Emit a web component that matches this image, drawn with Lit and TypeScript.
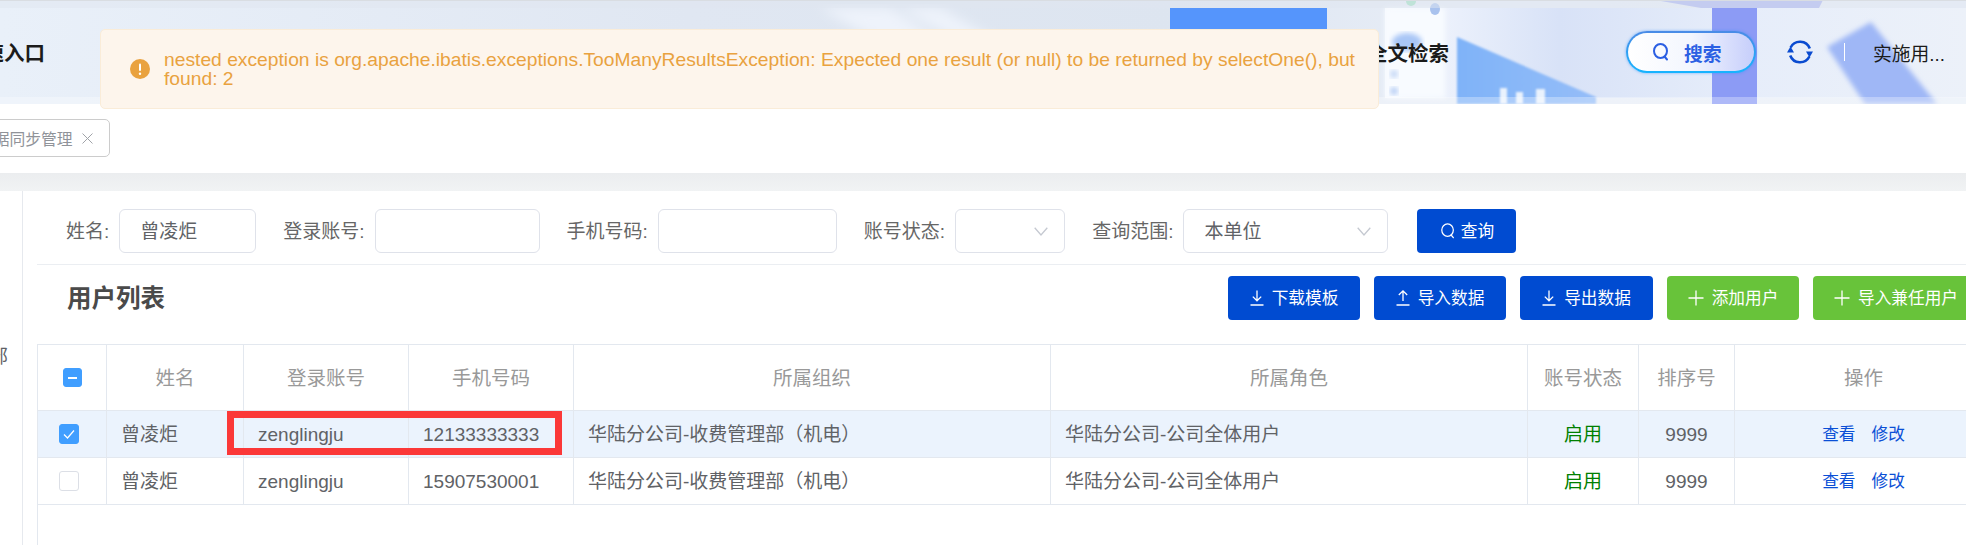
import { LitElement, html, css, svg } from "lit";
import { customElement } from "lit/decorators.js";

const searchIcon = (size: number, sw: number) => html`<svg class="ico" width=${size} height=${size} viewBox="0 0 18 18" fill="none" stroke="currentColor" stroke-width=${sw} stroke-linecap="round"><ellipse cx="8.5" cy="8" rx="6.5" ry="7"/><path d="M12.5 13.5l2.5 3"/></svg>`;
const downIcon = html`<svg class="ico" width="14" height="18" viewBox="0 0 14 18" fill="none" stroke="currentColor" stroke-width="1.3"><path d="M7 1.5v10M2.8 7.6L7 11.8l4.2-4.2M.5 16h13"/></svg>`;
const upIcon = html`<svg class="ico" width="14" height="18" viewBox="0 0 14 18" fill="none" stroke="currentColor" stroke-width="1.3"><path d="M7 12V2M2.8 6L7 1.8 11.2 6M.5 16h13"/></svg>`;
const plusIcon = html`<svg class="ico" width="16" height="16" viewBox="0 0 16 16" fill="none" stroke="currentColor" stroke-width="1.3"><path d="M8 .5v15M.5 8h15"/></svg>`;
const chevron = html`<svg class="chev" width="14" height="9" viewBox="0 0 14 9" fill="none" stroke="#c5c9d1" stroke-width="1.3"><path d="M.7.8L7 8l6.3-7.2"/></svg>`;

const rows = [
  { phone: "12133333333", selected: true },
  { phone: "15907530001", selected: false },
];

const headerArt = svg`
  <defs>
    <linearGradient id="bg" x1="0" x2="1" y1="0" y2="0">
      <stop offset="0" stop-color="#e9f0f9"/><stop offset=".35" stop-color="#e0e7f2"/>
      <stop offset=".6" stop-color="#dde5f0"/><stop offset=".72" stop-color="#e6ecf6"/>
      <stop offset="1" stop-color="#e9eff8"/>
    </linearGradient>
    <linearGradient id="panel" x1="0" x2="1" y1="0" y2="0">
      <stop offset="0" stop-color="#f6f9fe"/><stop offset=".3" stop-color="#d8e2f7"/>
      <stop offset=".6" stop-color="#e6edfa"/><stop offset="1" stop-color="#ecf1f9"/>
    </linearGradient>
    <linearGradient id="tri" x1="0" x2="1" y1="0" y2="0">
      <stop offset="0" stop-color="#7fb3f8"/><stop offset="1" stop-color="#95bdf8"/>
    </linearGradient>
    <filter id="b1"><feGaussianBlur stdDeviation="1"/></filter>
    <filter id="b2"><feGaussianBlur stdDeviation="2.500"/></filter>
    <filter id="b6"><feGaussianBlur stdDeviation="6"/></filter>
  </defs>
  <rect width="1966" height="104" fill="url(#bg)"/>
  <path d="M820 8l70 0 60 40-60 0zM900 8l40 0 70 40-40 0z" fill="#eef3fb" filter="url(#b6)"/>
  <rect x="1170" y="8" width="157" height="40" fill="#5595fc"/>
  <rect x="1385" y="8" width="581" height="90" fill="url(#panel)"/>
  <rect x="1385" y="8" width="60" height="90" fill="#f8fbff" filter="url(#b2)"/>
  <ellipse cx="1407" cy="42" rx="15" ry="9" fill="#a9c6f6" filter="url(#b2)"/>
  <circle cx="1394" cy="74" r="4" fill="#c6d8f6" filter="url(#b2)"/>
  <circle cx="1394" cy="91" r="4" fill="#b8cff5" filter="url(#b2)"/>
  <circle cx="1411" cy="1" r="5" fill="#9fe0c0"/>
  <ellipse cx="1435" cy="9" rx="5" ry="6" fill="#a9c2ee"/>
  <path d="M1457 37L1596 97 1596 104 1457 104Z" fill="url(#tri)" filter="url(#b1)"/>
  <path d="M1500 104v-16h7v16zM1516 104v-12h7v12zM1536 104v-15h9v15z" fill="#eaf2fd" filter="url(#b1)"/>
  <path d="M1655 0h168l-4 8h-118z" fill="#a9b3f0"/>
  <rect x="1712" y="8" width="45" height="96" fill="#8c9bf5"/>
  <path d="M1827 47L1871 22 1937 104 1865 104Z" fill="#9fb7f6" filter="url(#b2)"/>
  <rect y="0" width="1966" height="8" fill="#dfe6ef" opacity=".5"/>
  <rect y="0" width="1966" height="1" fill="#d9dde2"/>
  <rect y="97" width="1966" height="7" fill="#ffffff" opacity=".3"/>
`;

@customElement("app-root")
export class AppRoot extends LitElement {
  static styles = css`
    :host {
      display: block;
      position: relative;
      width: 1966px;
      height: 545px;
      overflow: hidden;
      background: #fff;
      font-family: "Liberation Sans", "Noto Sans CJK SC", sans-serif;
      font-size: 19px;
      color: #606266;
    }
    * { box-sizing: border-box; }
    .ico { flex: none; display: block; }

    .header {
      position: relative;
      height: 104px;
      display: flex;
      align-items: center;
      color: #1b1b1b;
      white-space: nowrap;
    }
    .art { position: absolute; inset: 0; }
    .header > div { position: relative; }
    .nav { font-size: 20.5px; font-weight: 700; width: 82px; }
    .nav-a { margin-left: -37px; }
    .nav-b { margin-left: 1322px; }
    .search {
      margin-left: 177px;
      width: 130px;
      height: 42px;
      border-radius: 21px;
      border: 2px solid transparent;
      background:
        linear-gradient(90deg, #fff 0%, #f3f6fe 50%, #c6cefb 100%) padding-box,
        linear-gradient(180deg, #4a8be6, #16b4ff) border-box;
      box-shadow: 0 0 3px rgba(40, 140, 255, 0.6);
      display: flex;
      align-items: center;
      gap: 14px;
      padding-left: 24px;
      color: #2b5fe3;
      font-weight: 700;
      font-size: 18.75px;
    }
    .refresh { margin-left: 31px; width: 26px; height: 28px; color: #0a4bd0; }
    .vline { margin-left: 31px; width: 1px; height: 18px; background: #fff; }
    .user { margin-left: 28px; font-size: 18.75px; }

    .tabs {
      height: 69px;
      padding-top: 15px;
      background: #fff;
    }
    .tab {
      display: flex;
      align-items: center;
      width: 133px;
      height: 38px;
      margin-left: -23px;
      border: 1px solid #ccc;
      border-radius: 5px;
      color: #909399;
      font-size: 15.75px;
      white-space: nowrap;
    }
    .tab svg { margin-left: 9px; }
    .gutter { height: 18px; background: linear-gradient(#ebedef, #f1f3f4); }

    .main { display: flex; height: 354px; }
    .side {
      flex: none;
      width: 23px;
      border-right: 1px solid #e6e9ee;
      overflow: hidden;
      white-space: nowrap;
      direction: rtl;
      padding-right: 14px;
      padding-top: 150px;
      color: #606266;
    }
    .content {
      flex: none;
      width: 1955px;
      margin-left: 14px;
      display: flex;
      flex-direction: column;
    }
    .filters {
      display: flex;
      align-items: center;
      gap: 27px;
      height: 74px;
      padding: 18px 0 11px 29px;
      border-bottom: 1px solid #ebeef2;
    }
    .field { display: flex; align-items: center; gap: 10px; white-space: nowrap; color: #666; }
    .lbl { padding-bottom: 3px; }
    .control {
      height: 44px;
      border: 1px solid #dfe2ea;
      border-radius: 6px;
      background: #fff;
      color: #606266;
      font: inherit;
      padding: 0 20px 3px;
      display: flex;
      align-items: center;
      justify-content: space-between;
      outline: none;
    }
    .w-name { width: 137px; }
    .w-acct { width: 165px; }
    .w-phone { width: 179px; }
    .w-status { width: 110px; padding: 0 16px 0 20px; justify-content: flex-end; }
    .w-range { width: 205px; padding-right: 16px; }
    .chev { margin-top: 3px; }
    .w-status .chev { margin-top: 0; }
    .btn {
      flex: none;
      height: 44px;
      border-radius: 4px;
      background: #004bd1;
      color: #fff;
      font-size: 16.67px;
      display: flex;
      align-items: center;
      justify-content: center;
      gap: 8px;
      white-space: nowrap;
    }
    .btn span { padding-bottom: 2px; }
    .btn.green { background: #68c33a; }
    .btn-q { width: 99px; gap: 5px; margin-left: 2px; }
    .toolbar {
      display: flex;
      align-items: center;
      height: 79px;
      padding: 11px 0 24px 30px;
    }
    .title {
      flex: none;
      width: 96px;
      padding-bottom: 4px;
      font-size: 24.500px;
      font-weight: 700;
      color: #4a4a4a;
      white-space: nowrap;
    }
    .actions { margin-left: 1065px; display: flex; gap: 14px; }
    .w132 { width: 132px; }
    .w133 { width: 133px; }
    .w166 { width: 166px; }

    .table {
      flex: 1;
      border-left: 1px solid #e3e8ef;
      border-top: 1px solid #e3e8ef;
    }
    .row {
      display: grid;
      grid-template-columns: 69px 137px 165px 165px 477px 477px 111px 96px 258px;
      height: 47px;
    }
    .row.head { height: 66px; color: #999; font-size: 19.5px; }
    .row.sel { background: #ebf3fd; }
    .cell {
      display: flex;
      align-items: center;
      padding: 0 14px;
      border-right: 1px solid #e3e8ef;
      border-bottom: 1px solid #e3e8ef;
      white-space: nowrap;
      min-width: 0;
    }
    .c { justify-content: center; padding: 0; }
    .cn { padding-bottom: 3px; }
    .la { padding-top: 2px; }
    .ok { color: #008000; }
    .links { gap: 16px; color: #0a4fd6; font-size: 16.67px; }
    .box {
      width: 20px;
      height: 20px;
      border-radius: 3px;
      border: 1px solid #dcdfe6;
      background: #fff;
      display: flex;
      align-items: center;
      justify-content: center;
      margin-right: 6px;
    }
    .box.on { background: #409eff; border-color: #409eff; }
    .box.head-box { margin-right: 0; width: 19px; height: 19px; }

    .alert {
      position: absolute;
      left: 100px;
      top: 29px;
      width: 1279px;
      height: 80px;
      display: flex;
      align-items: center;
      padding: 0 10px 0 29px;
      gap: 14px;
      background: #fdf5ec;
      border: 1px solid #faecd8;
      border-radius: 5px;
      color: #e9a23f;
      font-size: 19.25px;
      line-height: 19px;
    }
    .mark {
      position: absolute;
      left: 227px;
      top: 411px;
      width: 335px;
      height: 44px;
      border: 7px solid #fb3838;
    }
  `;

  render() {
    return html`
      <div class="header">
        <svg class="art" width="1966" height="104" viewBox="0 0 1966 104">${headerArt}</svg>
        <div class="nav nav-a">快速入口</div>
        <div class="nav nav-b">全文检索</div>
        <div class="search">${searchIcon(18, 2)}<span>搜索</span></div>
        <div class="refresh">
          <svg width="26" height="28" viewBox="0 0 26 28" fill="none" stroke="currentColor" stroke-width="2.6">
            <path d="M3.600 9.500A10.500 10.500 0 0 1 22.800 10.500"/>
            <path d="M22.400 18.500A10.500 10.500 0 0 1 3.200 17.500"/>
            <path d="M0 14.500h7L3.500 8.500z" fill="currentColor" stroke="none"/>
            <path d="M19 13.500h7L22.500 19.500z" fill="currentColor" stroke="none"/>
          </svg>
        </div>
        <div class="vline"></div>
        <div class="user">实施用...</div>
      </div>

      <div class="tabs">
        <div class="tab">
          <span>数据同步管理</span>
          <svg width="11" height="11" viewBox="0 0 11 11" fill="none" stroke="#a0a3a8" stroke-width="1"><path d="M.5.5l10 10M10.500.5l-10 10"/></svg>
        </div>
      </div>
      <div class="gutter"></div>

      <div class="main">
        <div class="side">部</div>
        <div class="content">
          <div class="filters">
            <div class="field"><span class="lbl">姓名:</span><input class="control w-name" .value=${"曾凌炬"} /></div>
            <div class="field"><span class="lbl">登录账号:</span><input class="control w-acct" /></div>
            <div class="field"><span class="lbl">手机号码:</span><input class="control w-phone" /></div>
            <div class="field"><span class="lbl">账号状态:</span><div class="control w-status">${chevron}</div></div>
            <div class="field"><span class="lbl">查询范围:</span><div class="control w-range"><span>本单位</span>${chevron}</div></div>
            <div class="btn btn-q">${searchIcon(16, 1.4)}<span>查询</span></div>
          </div>
          <div class="toolbar">
            <div class="title">用户列表</div>
            <div class="actions">
              <div class="btn w132">${downIcon}<span>下载模板</span></div>
              <div class="btn w132">${upIcon}<span>导入数据</span></div>
              <div class="btn w133">${downIcon}<span>导出数据</span></div>
              <div class="btn green w132">${plusIcon}<span>添加用户</span></div>
              <div class="btn green w166">${plusIcon}<span>导入兼任用户</span></div>
            </div>
          </div>
          <div class="table">
            <div class="row head">
              <div class="cell c">
                <div class="box on head-box">
                  <svg width="9" height="2" viewBox="0 0 9 2"><rect width="9" height="2" fill="#fff"/></svg>
                </div>
              </div>
              <div class="cell c cn">姓名</div>
              <div class="cell c cn">登录账号</div>
              <div class="cell c cn">手机号码</div>
              <div class="cell c cn">所属组织</div>
              <div class="cell c cn">所属角色</div>
              <div class="cell c cn">账号状态</div>
              <div class="cell c cn">排序号</div>
              <div class="cell c cn">操作</div>
            </div>
            ${rows.map(
              (r) => html`
                <div class="row ${r.selected ? "sel" : ""}">
                  <div class="cell c">
                    <div class="box ${r.selected ? "on" : ""}">
                      ${r.selected
                        ? html`<svg width="12" height="10" viewBox="0 0 12 10" fill="none" stroke="#fff" stroke-width="1.2"><path d="M1 5.500l3.500 3.500L11 1.500"/></svg>`
                        : ""}
                    </div>
                  </div>
                  <div class="cell cn">曾凌炬</div>
                  <div class="cell la">zenglingju</div>
                  <div class="cell la">${r.phone}</div>
                  <div class="cell cn">华陆分公司-收费管理部（机电）</div>
                  <div class="cell cn">华陆分公司-公司全体用户</div>
                  <div class="cell c cn ok">启用</div>
                  <div class="cell c la">9999</div>
                  <div class="cell c cn links"><span>查看</span><span>修改</span></div>
                </div>
              `
            )}
          </div>
        </div>
      </div>

      <div class="alert">
        <svg class="ico" width="20" height="20" viewBox="0 0 20 20">
          <circle cx="10" cy="10" r="10" fill="#e9a23f"/>
          <rect x="9" y="4.500" width="2" height="7.500" rx="1" fill="#fff"/>
          <circle cx="10" cy="14.800" r="1.200" fill="#fff"/>
        </svg>
        <span>nested exception is org.apache.ibatis.exceptions.TooManyResultsException: Expected one result (or null) to be returned by selectOne(), but found: 2</span>
      </div>
      <div class="mark"></div>
    `;
  }
}
